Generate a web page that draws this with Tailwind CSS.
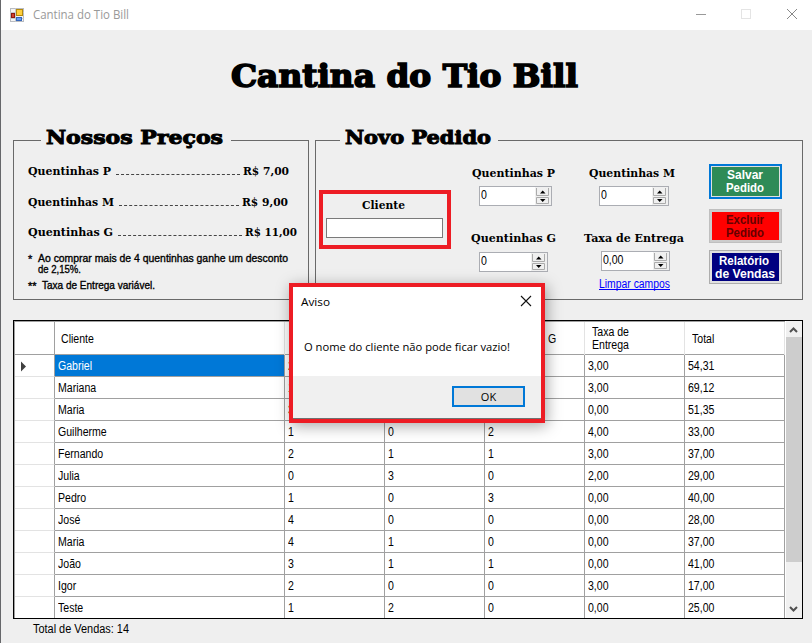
<!DOCTYPE html>
<html lang="pt-BR">
<head>
<meta charset="utf-8">
<title>Cantina do Tio Bill</title>
<script src="https://cdn.jsdelivr.net/npm/@tailwindcss/browser@4"></script>
</head>
<body class="w-[812px] h-[643px] overflow-hidden bg-[#efefef] text-black font-['Liberation_Sans',sans-serif] text-[12px] [&_svg]:overflow-visible">
<div class="relative flex flex-col w-[812px] h-[643px] border-l border-[#66676a]">
  <header class="h-[30px] shrink-0 bg-white flex items-center pl-[9px]">
    <svg width="14" height="14" viewBox="0 0 14 14"><rect x=".5" y=".5" width="13" height="13" fill="#f4f4f4" stroke="#b9bcc1"/><path d="M5.500 0v14M0 4.500h14M0 10.500h14" stroke="#c6c8cc"/><rect x="6.500" y="1.500" width="6" height="6" fill="#ffcf3d" stroke="#b58a0c"/><rect x="1.500" y="5.500" width="3" height="4" fill="#d2402e" stroke="#8d170e"/><rect x="6.500" y="9.500" width="5" height="3" fill="#669cf0" stroke="#3566bb"/></svg>
    <svg class="ml-[9px]" width="100" height="20"><text x="0" y="14" textLength="96" lengthAdjust="spacingAndGlyphs" class="font-['Open_Sans',sans-serif] text-[12px] fill-[#999999]">Cantina do Tio Bill</text></svg>
    <svg class="ml-auto" width="117" height="30" fill="none"><path d="M1 14.500h10" stroke="#999"/><rect x="46.500" y="9.500" width="9" height="9" stroke="#e4e4e4"/><path d="M92 9l10 10M102 9l-10 10" stroke="#888"/></svg>
  </header>
  <h1 class="h-[100px] shrink-0 pl-[230px]"><svg width="352" height="70"><text x="0" y="57" textLength="347" lengthAdjust="spacingAndGlyphs" stroke="#000" stroke-width="1.600" class="font-['DejaVu_Serif',serif] font-bold text-[31px]">Cantina do Tio Bill</text></svg></h1>

  <div class="flex h-[190px] shrink-0 pl-3 gap-1.5">
    <fieldset class="w-[296px] h-[170px] border border-[#696969]">
      <legend class="ml-[27px] w-[190px] h-5 pl-[5px]"><svg width="180" height="24"><text x="0" y="14" textLength="177" lengthAdjust="spacingAndGlyphs" stroke="#000" stroke-width="1" class="font-['DejaVu_Serif',serif] font-bold text-[19px]">Nossos Preços</text></svg></legend>
      <div class="pl-[14px] font-['DejaVu_Serif',serif] font-bold text-[11px]">
        <div class="h-[31px] pt-[12px] flex"><svg width="84" height="18"><text y="13" textLength="83" lengthAdjust="spacingAndGlyphs">Quentinhas P</text></svg><i class="w-[124px] ml-[4px] h-[13px] border-b border-dashed border-[#444]"></i><svg class="ml-[3px]" width="50" height="18"><text y="13" textLength="46" lengthAdjust="spacingAndGlyphs">R$ 7,00</text></svg></div>
        <div class="h-[30px] pt-[12px] flex"><svg width="87" height="18"><text y="13" textLength="86" lengthAdjust="spacingAndGlyphs">Quentinhas M</text></svg><i class="w-[120px] ml-[4px] h-[13px] border-b border-dashed border-[#444]"></i><svg class="ml-[3px]" width="50" height="18"><text y="13" textLength="46" lengthAdjust="spacingAndGlyphs">R$ 9,00</text></svg></div>
        <div class="h-[31px] pt-[12px] flex"><svg width="86" height="18"><text y="13" textLength="85" lengthAdjust="spacingAndGlyphs">Quentinhas G</text></svg><i class="w-[124px] ml-[4px] h-[13px] border-b border-dashed border-[#444]"></i><svg class="ml-[3px]" width="55" height="18"><text y="13" textLength="52" lengthAdjust="spacingAndGlyphs">R$ 11,00</text></svg></div>
      </div>
      <svg class="ml-[14px]" width="275" height="52"><g class="font-['Liberation_Sans',sans-serif] text-[11px]" stroke="#000" stroke-width=".35"><text x="0" y="21" fill="#115">*</text><text x="10" y="20" textLength="250" lengthAdjust="spacingAndGlyphs">Ao comprar mais de 4 quentinhas ganhe um desconto</text><text x="10" y="31" textLength="43" lengthAdjust="spacingAndGlyphs">de 2,15%.</text><text x="0" y="48">**</text><text x="14" y="47" textLength="113" lengthAdjust="spacingAndGlyphs">Taxa de Entrega variável.</text></g></svg>
    </fieldset>

    <fieldset class="w-[488px] h-[170px] border border-[#696969]">
      <legend class="ml-[24px] w-[158px] h-5 pl-[5px]"><svg width="150" height="24"><text x="0" y="14" textLength="146" lengthAdjust="spacingAndGlyphs" stroke="#000" stroke-width="1" class="font-['DejaVu_Serif',serif] font-bold text-[19px]">Novo Pedido</text></svg></legend>
      <div class="flex pl-[3px]">
        <div class="mt-[40px] w-[132px] h-[59px] border-4 border-[#ed1c24] pl-[3px] pt-[3px]">
          <svg class="ml-[36px] block" width="48" height="16"><text y="12" textLength="43" lengthAdjust="spacingAndGlyphs" class="font-['DejaVu_Serif',serif] font-bold text-[11px]">Cliente</text></svg>
          <div class="mt-[5px] w-[117px] h-[20px] bg-white border border-[#7a7a7a]"></div>
        </div>
        <div class="ml-[15px] mt-[15px] w-[100px]">
          <svg class="ml-[6px] block" width="90" height="16"><text y="12" textLength="83" lengthAdjust="spacingAndGlyphs" class="font-['DejaVu_Serif',serif] font-bold text-[11px]">Quentinhas P</text></svg>
          <div class="ml-[13px] mt-[5px] w-[73px] h-[20px] flex bg-white border border-[#abadb3]"><span class="pl-[1px] grow leading-[17px] origin-left scale-x-88">0</span><svg width="16" height="18"><use href="#spin"/></svg></div>
          <svg class="ml-[5px] mt-[24px] block" width="90" height="16"><text y="12" textLength="85" lengthAdjust="spacingAndGlyphs" class="font-['DejaVu_Serif',serif] font-bold text-[11px]">Quentinhas G</text></svg>
          <div class="ml-[13px] mt-[6px] w-[69px] h-[20px] flex bg-white border border-[#abadb3]"><span class="pl-[1px] grow leading-[17px] origin-left scale-x-88">0</span><svg width="16" height="18"><use href="#spin"/></svg></div>
        </div>
        <div class="ml-[16px] mt-[15px] w-[106px]">
          <svg class="ml-[7px] block" width="90" height="16"><text y="12" textLength="86" lengthAdjust="spacingAndGlyphs" class="font-['DejaVu_Serif',serif] font-bold text-[11px]">Quentinhas M</text></svg>
          <div class="ml-[17px] mt-[5px] w-[70px] h-[20px] flex bg-white border border-[#abadb3]"><span class="pl-[1px] grow leading-[17px] origin-left scale-x-88">0</span><svg width="16" height="18"><use href="#spin"/></svg></div>
          <svg class="ml-[2px] mt-[24px] block" width="104" height="16"><text y="12" textLength="100" lengthAdjust="spacingAndGlyphs" class="font-['DejaVu_Serif',serif] font-bold text-[11px]">Taxa de Entrega</text></svg>
          <div class="ml-[19px] mt-[5px] w-[69px] h-[20px] flex bg-white border border-[#abadb3]"><span class="pl-[1px] grow leading-[17px] origin-left scale-x-88">0,00</span><svg width="16" height="18"><use href="#spin"/></svg></div>
          <svg class="ml-[17px] mt-[6px] block" width="75" height="16"><text y="11" textLength="71" lengthAdjust="spacingAndGlyphs" class="font-['Liberation_Sans',sans-serif] text-[12px] fill-[#0000ff]">Limpar campos</text><path d="M0 12.500h71" stroke="#00f"/></svg>
        </div>
        <div class="ml-[21px] mt-[14px] w-[73px] font-['Liberation_Sans',sans-serif] font-bold text-[12px] text-center">
          <button class="block w-[73px] h-[35px] border-2 border-[#0078d7] p-px bg-[#e1e1e1]"><svg width="67" height="29" class="bg-[#2e8b57] fill-white"><text x="15" y="12" textLength="36" lengthAdjust="spacingAndGlyphs">Salvar</text><text x="14" y="25" textLength="38" lengthAdjust="spacingAndGlyphs">Pedido</text></svg></button>
          <button class="block mt-[10px] w-[73px] h-[34px] border border-[#bfbfbf] p-[2px] bg-[#cccccc]"><svg width="67" height="28" class="bg-[#ff0000] fill-[#660000]"><text x="14" y="12" textLength="38" lengthAdjust="spacingAndGlyphs">Excluir</text><text x="14" y="25" textLength="38" lengthAdjust="spacingAndGlyphs">Pedido</text></svg></button>
          <button class="block mt-[7px] w-[73px] h-[34px] border border-[#adadad] p-[2px] bg-[#e1e1e1]"><svg width="67" height="28" class="bg-[#000080] fill-white"><text x="7" y="12" textLength="50" lengthAdjust="spacingAndGlyphs">Relatório</text><text x="3" y="25" textLength="60" lengthAdjust="spacingAndGlyphs">de Vendas</text></svg></button>
        </div>
      </div>
    </fieldset>
  </div>

  <div class="ml-3 w-[790px] h-[299px] shrink-0 border border-black bg-white flex overflow-hidden">
    <div class="w-[771px] shrink-0 border-l border-t border-[#a0a0a0]">
      <div class="h-[33px] grid grid-cols-[40px_230px_100px_100px_100px_100px_100px] border-b border-[#a0a0a0] [&_b]:block [&_b]:font-normal [&_b]:origin-left [&_b]:scale-x-88">
        <span class="border-r border-[#a0a0a0]"></span>
        <span class="border-r border-[#e3e3e3] pl-[6px] leading-[34px]"><b>Cliente</b></span>
        <span class="border-r border-[#e3e3e3]"></span>
        <span class="border-r border-[#e3e3e3]"></span>
        <span class="border-r border-[#e3e3e3] pl-[63px] leading-[34px]"><b>G</b></span>
        <span class="border-r border-[#e3e3e3] pl-[7px] pt-[4px] leading-[13px]"><b>Taxa de<br>Entrega</b></span>
        <span class="border-r border-[#e3e3e3] pl-[7px] leading-[34px]"><b>Total</b></span>
      </div>
      <div id="rows"></div>
    </div>
    <div class="grow bg-[#f0f0f0] flex flex-col items-center ml-px">
      <svg width="16" height="16" fill="none" stroke="#505050" stroke-width="2"><path d="M4 11l3.500-3.500L11 11"/></svg>
      <div class="w-[16px] h-[225px] bg-[#cdcdcd]"></div>
      <svg class="mt-auto" width="16" height="17" fill="none" stroke="#505050" stroke-width="2"><path d="M4 6l3.500 3.500L11 6"/></svg>
    </div>
  </div>
  <div class="pl-8 h-[20px] leading-[20px]"><svg width="100" height="20"><text y="14" textLength="96" lengthAdjust="spacingAndGlyphs" class="font-['Liberation_Sans',sans-serif] text-[12px]">Total de Vendas: 14</text></svg></div>

  <div role="dialog" class="absolute left-[288px] top-[283px] w-[256px] h-[140px] border-4 border-[#ed1c24] bg-white flex flex-col shadow-[2px_3px_14px_rgba(0,0,0,0.35)]">
    <div class="h-[89px] font-['Open_Sans',sans-serif] text-[11.5px]"><svg width="248" height="89"><text x="8" y="19" textLength="29" lengthAdjust="spacingAndGlyphs">Aviso</text><text x="11" y="64" textLength="206" lengthAdjust="spacingAndGlyphs">O nome do cliente não pode ficar vazio!</text><path d="M228 9l10 10M238 9l-10 10" stroke="#111" stroke-width="1.100"/></svg></div>
    <div class="grow bg-[#f0f0f0] border-b border-[#707070] flex justify-end pt-[10px] pr-[16px]"><button class="w-[73px] h-[21px] border-2 border-[#0078d7] bg-[#e1e1e1] font-['Open_Sans',sans-serif] text-[11px] leading-[17px]">OK</button></div>
  </div>
</div>
<svg class="hidden"><symbol id="spin" viewBox="0 0 16 18"><path d="M0 0h16v18H0z" fill="#f0f0f0"/><path d="M1.500 1v7.500h12V1M1.500 16.500v-6h12v6z" fill="none" stroke="#ababab"/><path d="M5 6.500h5.500L7.700 3.500zM5 12h5.500l-2.800 3z"/></symbol></svg>
<script>
const data = [
  ["Gabriel",2,"","","3,00","54,31"],["Mariana",1,"","","3,00","69,12"],["Maria",3,"","","0,00","51,35"],
  ["Guilherme",1,0,2,"4,00","33,00"],["Fernando",2,1,1,"3,00","37,00"],["Julia",0,3,0,"2,00","29,00"],
  ["Pedro",1,0,3,"0,00","40,00"],["José",4,0,0,"0,00","28,00"],["Maria",4,1,0,"0,00","37,00"],
  ["João",3,1,1,"0,00","41,00"],["Igor",2,0,0,"3,00","17,00"],["Teste",1,2,0,"0,00","25,00"]];
document.getElementById("rows").innerHTML = data.map((r, i) =>
  '<div class="h-[22px] leading-[22px] grid grid-cols-[40px_230px_100px_100px_100px_100px_100px]">' +
  '<span class="border-b border-b-[#e3e3e3] border-r border-r-[#a0a0a0]">' + (i ? '' : '<svg width="20" height="21"><path d="M6 6.500l5 5-5 5z" fill="#404040"/></svg>') + '</span>' +
  r.map((v, j) => '<span class="h-[22px] border-r border-b border-[#a0a0a0] pl-[3px] ' + (!i && !j ? 'bg-[#0078d7] text-white' : '') + '"><b class="block font-normal origin-left scale-x-88">' + v + '</b></span>').join('') +
  '</div>').join('');
</script>
</body>
</html>
